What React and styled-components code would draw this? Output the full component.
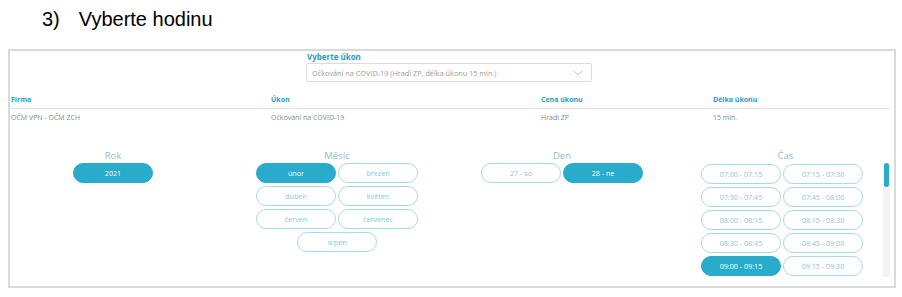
import React from "react";
import styled, { createGlobalStyle } from "styled-components";

const GlobalStyle = createGlobalStyle`
  body {
    margin: 0;
    background: #ffffff;
    font-family: "Open Sans", "DejaVu Sans", sans-serif;
  }
`;

const Page = styled.div`
  width: 902px;
  height: 297px;
  overflow: hidden;
`;

const Title = styled.h1`
  margin: 7px 0 18px 42px;
  font-family: "Liberation Sans", Arial, sans-serif;
  font-weight: 400;
  font-size: 20px;
  line-height: 24px;
  color: #000;
  display: flex;
  gap: 19px;
`;

const Frame = styled.div`
  margin: 0 6px 0 8px;
  border: 2px solid #dadada;
  height: 239px;
  box-sizing: border-box;
`;

const SelectBlock = styled.div`
  margin-left: 296px;
  width: 286px;
`;

const FieldLabel = styled.div`
  font-size: 8px;
  font-weight: 700;
  line-height: 11px;
  color: #2b9cc1;
  margin-bottom: 1px;
  padding-left: 1px;
`;

const Select = styled.div`
  height: 19px;
  box-sizing: border-box;
  border: 1px solid #dcdcdc;
  border-radius: 2px;
  display: flex;
  align-items: center;
  justify-content: space-between;
  padding: 0 8px 0 5px;
  font-size: 7.3px;
  color: #9a9a9a;
`;

const Table = styled.div`
  margin: 13px 4px 0 0;
  padding-left: 1px;
`;

const TableRow = styled.div`
  display: grid;
  grid-template-columns: 260px 270px 172px 1fr;
  font-size: 7px;
  line-height: 10px;
  padding: ${(p) => (p.$head ? "0 0 3px" : "4px 0 0")};
  border-bottom: ${(p) => (p.$head ? "1px solid #e2e2e2" : "none")};
  font-weight: ${(p) => (p.$head ? 700 : 400)};
  color: ${(p) => (p.$head ? "#2b9cc1" : "#8a8a8a")};
`;

const Sections = styled.div`
  display: grid;
  grid-template-columns: 206px 242px 208px 1fr;
  margin-top: 27px;
`;

const Section = styled.div`
  display: flex;
  flex-direction: column;
  align-items: center;
  padding: ${(p) => p.$pad || "0"};
`;

const SectionLabel = styled.div`
  font-size: 9.5px;
  line-height: 12px;
  color: #9bb9c9;
  margin-bottom: 1px;
`;

const Pill = styled.div`
  width: 80px;
  height: 20px;
  box-sizing: border-box;
  border-radius: 10px;
  border: 1px solid ${(p) => (p.$active ? "#29abcb" : "#a9d9e6")};
  background: ${(p) => (p.$active ? "#29abcb" : "#fff")};
  color: ${(p) => (p.$active ? "#ffffff" : "#86c8db")};
  font-size: 7.2px;
  display: flex;
  align-items: center;
  justify-content: center;
  grid-column: ${(p) => (p.$wide ? "1 / -1" : "auto")};
  justify-self: center;
`;

const PillGrid = styled.div`
  display: grid;
  grid-template-columns: 80px 80px;
  column-gap: 2px;
  row-gap: 3px;
`;

const PillRow = styled.div`
  display: flex;
  gap: 2px;
`;

const TimeArea = styled.div`
  align-self: stretch;
  height: 114px;
  display: flex;
`;

const TimeClip = styled.div`
  flex: 1;
  overflow: hidden;
  display: flex;
  justify-content: center;
`;

const TimeGrid = styled(PillGrid)`
  padding-top: 1px;
  height: max-content;
`;

const ScrollTrack = styled.div`
  width: 7px;
  background: #f3f3f3;
  display: flex;
  flex-direction: column;
  align-items: center;
`;

const ScrollThumb = styled.div`
  width: 5px;
  height: 24px;
  border-radius: 3px;
  background: #29abcb;
`;

const Chevron = () => (
  <svg width="10" height="6" viewBox="0 0 10 6" fill="none">
    <path d="M0.5 0.5 L5 5 L9.5 0.5" stroke="#b5b5b5" strokeWidth="0.8" />
  </svg>
);

const months = ["únor", "březen", "duben", "květen", "červen", "červenec"];

const pad = (n) => String(n).padStart(2, "0");
const times = [];
for (let m = 7 * 60; m < 10 * 60; m += 15) {
  const e = m + 15;
  times.push(
    `${pad(Math.floor(m / 60))}:${pad(m % 60)} - ${pad(Math.floor(e / 60))}:${pad(e % 60)}`
  );
}

export default function App() {
  return (
    <Page>
      <GlobalStyle />
      <Title>
        <span>3)</span>
        <span>Vyberte hodinu</span>
      </Title>
      <Frame>
        <SelectBlock>
          <FieldLabel>Vyberte úkon</FieldLabel>
          <Select>
            <span>Očkování na COVID-19 (Hradí ZP, délka úkonu 15 min.)</span>
            <Chevron />
          </Select>
        </SelectBlock>

        <Table>
          <TableRow $head>
            <span>Firma</span>
            <span>Úkon</span>
            <span>Cena úkonu</span>
            <span>Délka úkonu</span>
          </TableRow>
          <TableRow>
            <span>OČM VPN - OČM ZCH</span>
            <span>Očkování na COVID-19</span>
            <span>Hradí ZP</span>
            <span>15 min.</span>
          </TableRow>
        </Table>

        <Sections>
          <Section>
            <SectionLabel>Rok</SectionLabel>
            <Pill $active>2021</Pill>
          </Section>

          <Section>
            <SectionLabel>Měsíc</SectionLabel>
            <PillGrid>
              {months.map((m, i) => (
                <Pill key={m} $active={i === 0}>
                  {m}
                </Pill>
              ))}
              <Pill $wide>srpen</Pill>
            </PillGrid>
          </Section>

          <Section>
            <SectionLabel>Den</SectionLabel>
            <PillRow>
              <Pill>27 - so</Pill>
              <Pill $active>28 - ne</Pill>
            </PillRow>
          </Section>

          <Section $pad="0 4px 0 15px">
            <SectionLabel>Čas</SectionLabel>
            <TimeArea>
              <TimeClip>
                <TimeGrid>
                  {times.map((t) => (
                    <Pill key={t} $active={t === "09:00 - 09:15"}>
                      {t}
                    </Pill>
                  ))}
                </TimeGrid>
              </TimeClip>
              <ScrollTrack>
                <ScrollThumb />
              </ScrollTrack>
            </TimeArea>
          </Section>
        </Sections>
      </Frame>
    </Page>
  );
}
